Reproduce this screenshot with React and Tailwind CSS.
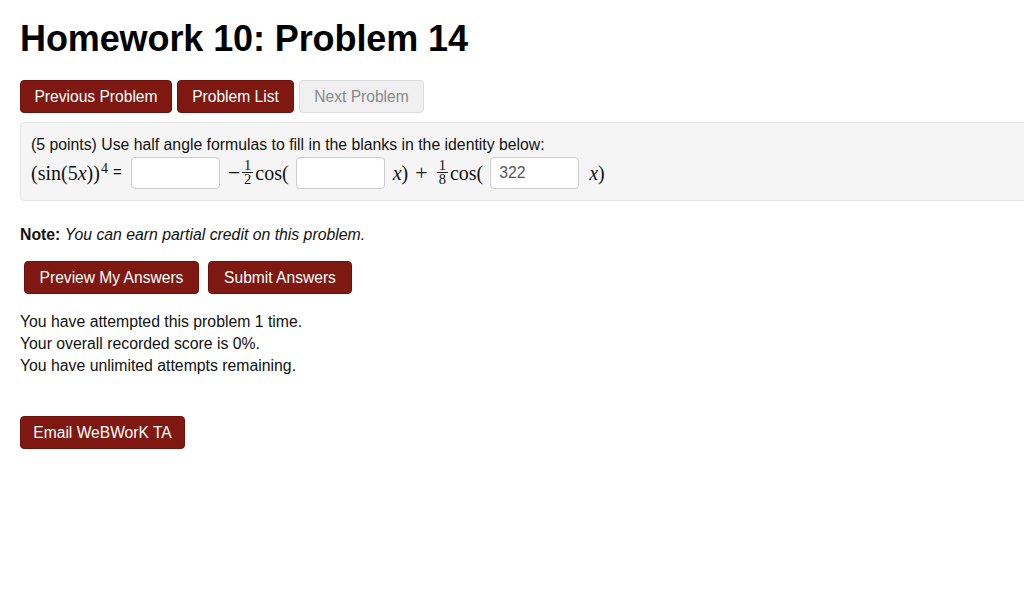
import React from "react";

const sans = { fontFamily: '"Liberation Sans", Arial, sans-serif' };
const serif = { fontFamily: '"Liberation Serif", "Times New Roman", serif' };

const RedButton = ({children, className = ""}) => (
    <button className={`h-[33px] rounded-[4px] border border-[#6a120b] bg-[#7e1810] text-[15.6px] text-white ${className}`}>
        {children}
    </button>
);

const Blank = ({value = ""}) => (
    <input
        readOnly
        value={value}
        className="h-[32px] w-[89px] rounded-[4px] border border-[#cccccc] bg-white px-[8px] text-[15.8px] text-[#555] outline-none"
        style={sans}
    />
);

const Frac = ({num, den}) => (
    <span className="mx-[2px] inline-flex flex-col items-center text-[14.5px] leading-[13px]">
        <span className="border-b border-[#222] px-[2px]">{num}</span>
        <span>{den}</span>
    </span>
);

export default function App() {
    return (
        <div className="min-h-[597px] w-[1024px] overflow-hidden bg-white text-[#111]" style={sans}>
            <div className="pl-[20px]">
                <h1 className="pt-[19px] text-[36px] font-bold leading-[40px] tracking-[-0.1px] text-black">
                    Homework 10: Problem 14
                </h1>

                <div className="mt-[21px] flex gap-[5px]">
                    <RedButton className="w-[152px]">Previous Problem</RedButton>
                    <RedButton className="w-[117px]">Problem List</RedButton>
                    <button className="h-[33px] w-[125px] rounded-[4px] border border-[#dcdcdc] bg-[#f0f0f0] text-[15.6px] text-[#8a8a8a]">
                        Next Problem
                    </button>
                </div>

                <div className="mt-[9px] w-[1020px] rounded-[4px] border border-[#e3e3e3] bg-[#f5f5f5] pb-[11px] pl-[10px] pt-[12px]">
                    <p className="text-[15.8px] leading-[19px]">
                        (5 points) Use half angle formulas to fill in the blanks in the identity below:
                    </p>
                    <div className="mt-[2px] flex items-center text-[20px]" style={serif}>
                        <span>
                            (sin(5<i>x</i>))<sup className="ml-[1px] text-[14px]">4</sup>
                        </span>
                        <span className="ml-[5px] mr-[9px] text-[15px]" style={sans}>=</span>
                        <Blank/>
                        <span className="ml-[8px] flex items-center">
                            <span className="text-[22px]">−</span><Frac num="1" den="2"/>cos(
                        </span>
                        <span className="ml-[7px]"><Blank/></span>
                        <span className="ml-[8px] flex items-center">
                            <i>x</i>)<span className="mx-[7px] text-[22px]">+</span><Frac num="1" den="8"/>cos(
                        </span>
                        <span className="ml-[7px]"><Blank value="322"/></span>
                        <span className="ml-[10px]"><i>x</i>)</span>
                    </div>
                </div>

                <p className="mt-[24px] text-[15.8px] leading-[19px]">
                    <b>Note:</b> <i>You can earn partial credit on this problem.</i>
                </p>

                <div className="ml-[4px] mt-[17px] flex gap-[9px]">
                    <RedButton className="w-[175px]">Preview My Answers</RedButton>
                    <RedButton className="w-[144px]">Submit Answers</RedButton>
                </div>

                <div className="mt-[17px] text-[15.8px] leading-[22px]">
                    <p>You have attempted this problem 1 time.</p>
                    <p>Your overall recorded score is 0%.</p>
                    <p>You have unlimited attempts remaining.</p>
                </div>

                <div className="mt-[39px]">
                    <RedButton className="w-[165px]">Email WeBWorK TA</RedButton>
                </div>
            </div>
        </div>
    );
}
